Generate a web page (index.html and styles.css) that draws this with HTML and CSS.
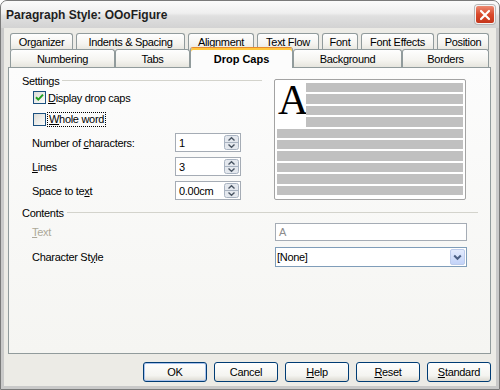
FILE: index.html
```html
<!DOCTYPE html>
<html lang="en">
<head>
    <meta charset="UTF-8">
    <title>Paragraph Style: OOoFigure</title>
    <link rel="stylesheet" href="styles.css">
</head>
<body>
    <div class="window">
        <div class="titlebar">
            <span class="title">Paragraph Style: OOoFigure</span>
            <button class="close" title="Close">
                <svg width="12" height="12" viewBox="0 0 12 12"><path d="M2 2 L10 10 M10 2 L2 10" stroke="#fff" stroke-width="2.2" stroke-linecap="round"/></svg>
            </button>
        </div>

        <div class="dialog">
            <div class="tabs">
                <div class="tab-row back">
                    <div class="tab t-organizer">Organizer</div>
                    <div class="tab t-indents">Indents &amp; Spacing</div>
                    <div class="tab t-alignment">Alignment</div>
                    <div class="tab t-textflow">Text Flow</div>
                    <div class="tab t-font">Font</div>
                    <div class="tab t-effects">Font Effects</div>
                    <div class="tab t-position">Position</div>
                </div>
                <div class="tab-row front">
                    <div class="tab t-numbering">Numbering</div>
                    <div class="tab t-tabs">Tabs</div>
                    <div class="tab t-dropcaps active">Drop Caps</div>
                    <div class="tab t-background">Background</div>
                    <div class="tab t-borders">Borders</div>
                </div>
            </div>

            <div class="panel">
                <div class="settings">
                    <div class="settings-left">
                        <div class="group-title">Settings</div>

                        <div class="check-row first">
                            <span class="checkbox">
                                <svg width="11" height="11" viewBox="0 0 11 11"><path d="M2 5.2 L4.3 7.6 L9 2.6" fill="none" stroke="#21a121" stroke-width="2"/></svg>
                            </span>
                            <span><u>D</u>isplay drop caps</span>
                        </div>
                        <div class="check-row">
                            <span class="checkbox"></span>
                            <span class="focus"><u>W</u>hole word</span>
                        </div>

                        <div class="field-grid">
                            <span>Number of <u>c</u>haracters:</span>
                            <div class="spin">
                                <span>1</span>
                                <svg class="spin-btn" width="15" height="15" viewBox="0 0 15 15"><rect x="0.5" y="0.5" width="14" height="14" rx="2" fill="#e4e8ee" stroke="#a9b3c1"/><line x1="1" y1="7.5" x2="14" y2="7.5" stroke="#a9b3c1"/><path d="M4.5 5.5 L7.5 2.8 L10.5 5.5" fill="none" stroke="#4a5563" stroke-width="1.4"/><path d="M4.5 9.5 L7.5 12.2 L10.5 9.5" fill="none" stroke="#4a5563" stroke-width="1.4"/></svg>
                            </div>

                            <span><u>L</u>ines</span>
                            <div class="spin">
                                <span>3</span>
                                <svg class="spin-btn" width="15" height="15" viewBox="0 0 15 15"><rect x="0.5" y="0.5" width="14" height="14" rx="2" fill="#e4e8ee" stroke="#a9b3c1"/><line x1="1" y1="7.5" x2="14" y2="7.5" stroke="#a9b3c1"/><path d="M4.5 5.5 L7.5 2.8 L10.5 5.5" fill="none" stroke="#4a5563" stroke-width="1.4"/><path d="M4.5 9.5 L7.5 12.2 L10.5 9.5" fill="none" stroke="#4a5563" stroke-width="1.4"/></svg>
                            </div>

                            <span>Space to te<u>x</u>t</span>
                            <div class="spin">
                                <span>0.00cm</span>
                                <svg class="spin-btn" width="15" height="15" viewBox="0 0 15 15"><rect x="0.5" y="0.5" width="14" height="14" rx="2" fill="#e4e8ee" stroke="#a9b3c1"/><line x1="1" y1="7.5" x2="14" y2="7.5" stroke="#a9b3c1"/><path d="M4.5 5.5 L7.5 2.8 L10.5 5.5" fill="none" stroke="#4a5563" stroke-width="1.4"/><path d="M4.5 9.5 L7.5 12.2 L10.5 9.5" fill="none" stroke="#4a5563" stroke-width="1.4"/></svg>
                            </div>
                        </div>
                    </div>

                    <!-- drop cap preview -->
                    <div class="preview">
                        <div class="cap">A</div>
                        <div class="bar"></div>
                        <div class="bar"></div>
                        <div class="bar"></div>
                        <div class="bar"></div>
                        <div class="bar full"></div>
                        <div class="bar full"></div>
                        <div class="bar full"></div>
                        <div class="bar full"></div>
                        <div class="bar full"></div>
                        <div class="bar full"></div>
                    </div>
                </div>

                <div class="group-title contents-title">Contents</div>
                <div class="contents-grid">
                    <span class="disabled"><u>T</u>ext</span>
                    <div class="textbox">A</div>

                    <span>Character St<u>y</u>le</span>
                    <div class="select">
                        <span>[None]</span>
                        <span class="drop-btn">
                            <svg width="9" height="7" viewBox="0 0 9 7"><path d="M1.2 1.5 L4.5 4.8 L7.8 1.5" fill="none" stroke="#4d6185" stroke-width="2"/></svg>
                        </span>
                    </div>
                </div>
            </div>

            <div class="buttons">
                <button class="btn default">OK</button>
                <button class="btn">Cancel</button>
                <button class="btn"><u>H</u>elp</button>
                <button class="btn"><u>R</u>eset</button>
                <button class="btn"><u>S</u>tandard</button>
            </div>
        </div>
    </div>
</body>
</html>
```

FILE: styles.css
```css
body {
    margin: 0;
    background: #fff;
    font-family: "Liberation Sans", Arial, sans-serif;
    font-size: 11px;
    letter-spacing: -0.3px;
    color: #000;
}
.window {
    width: 500px;
    height: 390px;
    box-sizing: border-box;
    border: 1px solid #7a7a7a;
    border-radius: 7px 7px 0 0;
    background: #c9c9c9;
    display: flex;
    flex-direction: column;
    overflow: hidden;
}
.titlebar {
    height: 27px;
    flex: none;
    display: flex;
    align-items: center;
    justify-content: space-between;
    padding: 0 4px 0 5px;
    background: linear-gradient(#fbfbfb, #efefef 45%, #e0e0e0 55%, #d3d3d3);
}
.title {
    font-size: 12px;
    font-weight: bold;
    letter-spacing: 0;
    color: #1e1e1e;
}
.close {
    width: 20px;
    height: 19px;
    padding: 0;
    border: 1px solid #f4f4f4;
    border-radius: 3px;
    background: linear-gradient(#ec8a72, #d9492b 50%, #c5361b);
    display: flex;
    align-items: center;
    justify-content: center;
    box-shadow: 0 0 0 1px #b7b7b7;
}
.dialog {
    flex: 1;
    margin: 0 3px 3px;
    background: #ecebe6;
    padding: 5px 5px 4px 4px;
    display: flex;
    flex-direction: column;
}

/* tabs */
.tabs {
    padding-left: 2px;
}
.tab-row {
    display: flex;
    height: 17px;
}
.tab-row.back {
    gap: 3px;
}
.tab-row.front {
    height: 18px;
    margin-top: -1px;
    position: relative;
    z-index: 1;
}
.tab {
    box-sizing: border-box;
    height: 100%;
    flex: none;
    border: 1px solid #919b9c;
    border-bottom: none;
    border-radius: 3px 3px 0 0;
    background: linear-gradient(#fefefe, #f5f4f0 60%, #e6e5de);
    display: flex;
    align-items: center;
    justify-content: center;
}
.tab.active {
    height: 21px;
    margin-top: -2px;
    font-weight: bold;
    letter-spacing: 0;
    background: #fcfcfc;
    border-top: 1px solid #e68b2c;
    box-shadow: inset 0 2px 0 #ffc73c;
    padding-top: 1px;
}
.t-organizer { width: 63px; }
.t-indents { width: 109px; }
.t-alignment { width: 66px; }
.t-textflow { width: 62px; }
.t-font { width: 36px; }
.t-effects { width: 73px; }
.t-position { width: 52px; }
.t-numbering { width: 105px; }
.t-tabs { width: 75px; }
.t-dropcaps { width: 103px; }
.t-background { width: 109px; }
.t-borders { width: 87px; }

/* panel */
.panel {
    flex: 1;
    border: 1px solid #919b9c;
    background: linear-gradient(#fcfcfc, #f5f5f2);
    padding: 6px 12px 0 13px;
}
.group-title {
    display: flex;
    align-items: center;
    gap: 3px;
    height: 13px;
}
.group-title::after {
    content: "";
    flex: 1;
    border-top: 1px solid #d3d3cc;
}
.settings {
    display: flex;
    gap: 12px;
}
.settings-left {
    width: 240px;
}
.check-row {
    display: flex;
    align-items: center;
    gap: 2px;
    height: 17px;
    margin-top: 5px;
    padding-left: 11px;
}
.check-row.first {
    margin-top: 2px;
}
.checkbox {
    width: 13px;
    height: 13px;
    box-sizing: border-box;
    border: 1px solid #1c5180;
    background: linear-gradient(135deg, #dcdcd7, #fcfcfb);
    display: flex;
    align-items: center;
    justify-content: center;
}
.focus {
    outline: 1px dotted #000;
    padding: 0 1px 1px;
}
.field-grid {
    margin-top: 5px;
    padding-left: 10px;
    display: grid;
    grid-template-columns: 143px 66px;
    grid-auto-rows: 19px;
    row-gap: 5px;
    align-items: center;
}
.spin {
    height: 19px;
    box-sizing: border-box;
    border: 1px solid #a5acb5;
    background: #fff;
    display: flex;
    align-items: center;
    justify-content: space-between;
    padding: 0 1px 0 3px;
}
.spin-btn {
    display: block;
}

/* preview */
.preview {
    width: 192px;
    height: 121px;
    margin-top: 5px;
    box-sizing: border-box;
    border: 1px solid #a3a3a3;
    border-radius: 2px;
    background: #fff;
    padding: 3px 2px 4px;
    display: grid;
    grid-template-columns: 29px 1fr;
    grid-template-rows: repeat(10, 1fr);
    row-gap: 2px;
}
.cap {
    grid-row: 1 / 5;
    font-family: "Liberation Serif", "Times New Roman", serif;
    font-size: 42px;
    letter-spacing: 0;
    line-height: 34px;
    padding-left: 1px;
}
.bar {
    background: #c0c0c0;
}
.bar.full {
    grid-column: 1 / 3;
}

/* contents */
.contents-title {
    margin-top: 6px;
}
.contents-grid {
    margin-top: 4px;
    padding-left: 10px;
    display: grid;
    grid-template-columns: 243px 192px;
    grid-template-rows: 18px 20px;
    row-gap: 6px;
    align-items: center;
}
.disabled {
    color: #aca899;
}
.textbox {
    height: 18px;
    box-sizing: border-box;
    border: 1px solid #a5acb5;
    background: #fff;
    color: #8c8c8c;
    padding-left: 3px;
    display: flex;
    align-items: center;
}
.select {
    height: 20px;
    box-sizing: border-box;
    border: 1px solid #7f9db9;
    background: #fff;
    display: flex;
    align-items: center;
    justify-content: space-between;
    padding: 0 1px 0 1px;
}
.drop-btn {
    width: 15px;
    height: 16px;
    box-sizing: border-box;
    border: 1px solid #bccbeb;
    border-radius: 2px;
    background: linear-gradient(#e3ebfd, #c3d3f8);
    display: flex;
    align-items: center;
    justify-content: center;
}

/* buttons */
.buttons {
    display: flex;
    justify-content: flex-end;
    gap: 7px;
    margin-top: 8px;
}
.btn {
    width: 64px;
    height: 20px;
    padding: 0;
    border: 1px solid #003c74;
    border-radius: 3px;
    background: linear-gradient(#fefefe, #f4f4f0 70%, #dcdad2);
    font-family: inherit;
    font-size: 11px;
    letter-spacing: -0.3px;
    color: #000;
}
.btn.default {
    box-shadow: inset 0 0 0 1px #a9c2ec;
}
```
